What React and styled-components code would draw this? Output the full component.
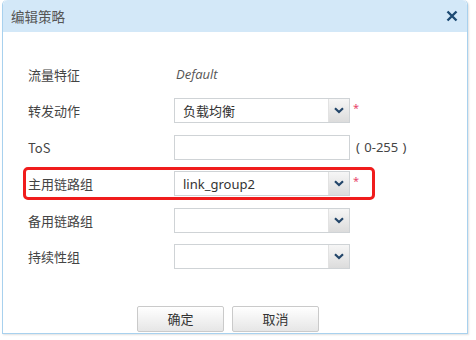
import React from "react";
import styled, { createGlobalStyle } from "styled-components";

const Global = createGlobalStyle`
  html, body { margin: 0; padding: 0; background: #ffffff; }
  body { font-family: "Noto Sans", "Noto Sans CJK SC", sans-serif; }
`;

const Page = styled.div`
  width: 476px;
  height: 340px;
  padding: 0 0 0 2px;
  box-sizing: border-box;
`;

const Dialog = styled.div`
  width: 466px;
  height: 334px;
  box-sizing: border-box;
  border: 1px solid #a8d1ee;
  border-top: none;
  border-radius: 5px 5px 0 0;
  background: #fff;
  box-shadow: 1px 1px 2px rgba(0, 0, 0, 0.12);
  display: flex;
  flex-direction: column;
  overflow: hidden;
`;

const Header = styled.div`
  height: 32px;
  background: #d3e8f8;
  border-radius: 5px 5px 0 0;
  display: flex;
  align-items: center;
  justify-content: space-between;
  padding: 0 9px 0 8px;
  flex-shrink: 0;
`;

const Title = styled.div`
  font-family: "Noto Sans CJK SC", sans-serif;
  font-size: 13.5px;
  color: #555;
`;

const Close = styled.svg`
  width: 12px;
  height: 12px;
  margin-bottom: 1px;
`;

const Body = styled.div`
  flex: 1;
  display: flex;
  flex-direction: column;
  padding: 23.75px 0 0 25px;
`;

const Row = styled.div`
  position: relative;
  height: 36.5px;
  display: flex;
  align-items: center;
  &::after {
    content: "";
    display: ${(p) => (p.$highlight ? "block" : "none")};
    position: absolute;
    left: -5px;
    top: 1.5px;
    width: 352px;
    height: 33px;
    box-sizing: border-box;
    border: 3px solid #f01c1c;
    border-radius: 5px;
    pointer-events: none;
  }
`;

const Label = styled.div`
  width: 146px;
  font-family: "Noto Sans CJK SC", sans-serif;
  font-size: 13px;
  color: #444;
  flex-shrink: 0;
`;

const Value = styled.div`
  font-family: "Open Sans", sans-serif;
  font-style: italic;
  font-size: 13px;
  color: #555;
  padding-left: 2px;
`;

const Field = styled.div`
  width: 176px;
  height: 25px;
  box-sizing: border-box;
  border: 1px solid #cfd3d6;
  background: #fff;
  display: flex;
  align-items: stretch;
`;

const FieldText = styled.div`
  flex: 1;
  display: flex;
  align-items: center;
  padding-left: 8px;
  font-family: "Noto Sans", "Noto Sans CJK SC", sans-serif;
  font-size: 13px;
  color: #333;
`;

const DropButton = styled.div`
  width: 20px;
  border-left: 1px solid #e2e2e2;
  background: linear-gradient(#f6f6f6, #dcdcdc);
  display: flex;
  align-items: center;
  justify-content: center;
`;

const Required = styled.span`
  color: #e8466a;
  font-size: 11px;
  margin-left: 3px;
  align-self: flex-start;
  margin-top: 8px;
`;

const Hint = styled.span`
  font-family: "Noto Sans", sans-serif;
  font-size: 13px;
  color: #444;
  margin-left: 6px;
  word-spacing: 1px;
`;

const Footer = styled.div`
  display: flex;
  justify-content: center;
  gap: 8px;
  margin-top: 31px;
  padding-right: 39px;
`;

const Button = styled.button`
  width: 87px;
  height: 26px;
  box-sizing: border-box;
  border: 1px solid #cacaca;
  border-radius: 2px;
  background: linear-gradient(#ffffff, #e6e6e6);
  font-family: "Noto Sans CJK SC", sans-serif;
  font-size: 13px;
  color: #333;
  padding: 0;
`;

const Chevron = () => (
  <svg width="10" height="7" viewBox="0 0 10 7">
    <path d="M1 1.2 L5 5 L9 1.2" fill="none" stroke="#23466a" strokeWidth="2.2" />
  </svg>
);

const Select = ({ value, required }) => (
  <>
    <Field>
      <FieldText>{value}</FieldText>
      <DropButton>
        <Chevron />
      </DropButton>
    </Field>
    {required && <Required>*</Required>}
  </>
);

export default function App() {
  return (
    <>
      <Global />
      <Page>
        <Dialog>
          <Header>
            <Title>编辑策略</Title>
            <Close viewBox="0 0 12 12">
              <path d="M1.5 1.5 L10.5 10.5 M10.5 1.5 L1.5 10.5" stroke="#1d4a73" strokeWidth="2.4" />
            </Close>
          </Header>
          <Body>
            <Row>
              <Label>流量特征</Label>
              <Value>Default</Value>
            </Row>
            <Row>
              <Label>转发动作</Label>
              <Select value="负载均衡" required />
            </Row>
            <Row>
              <Label>ToS</Label>
              <Field />
              <Hint>( 0-255 )</Hint>
            </Row>
            <Row $highlight>
              <Label>主用链路组</Label>
              <Select value="link_group2" required />
            </Row>
            <Row>
              <Label>备用链路组</Label>
              <Select value="" />
            </Row>
            <Row>
              <Label>持续性组</Label>
              <Select value="" />
            </Row>
            <Footer>
              <Button>确定</Button>
              <Button>取消</Button>
            </Footer>
          </Body>
        </Dialog>
      </Page>
    </>
  );
}
